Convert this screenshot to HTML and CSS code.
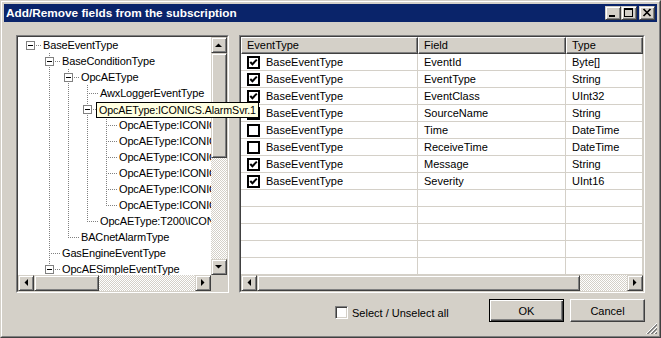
FILE: index.html
```html
<!DOCTYPE html>
<html>
<head>
<meta charset="utf-8">
<title>Add/Remove fields</title>
<link rel="stylesheet" href="styles.css">
</head>
<body>
<div class="window">
  <div class="frame">
    <div class="titlebar">
      <span class="title">Add/Remove fields from the subscription</span>
      <div class="caps">
        <div class="cap raised"><svg width="14" height="12" viewBox="0 0 14 12"><rect x="3" y="8" width="6" height="2" fill="#000"/></svg></div>
        <div class="cap raised"><svg width="14" height="12" viewBox="0 0 14 12"><path d="M2 1h9v9h-9z M3 3h7v6h-7z" fill="#000" fill-rule="evenodd"/></svg></div>
        <div class="cap raised close"><svg width="14" height="12" viewBox="0 0 14 12"><path d="M3.5 2 L10.5 9 M10.5 2 L3.5 9" stroke="#000" stroke-width="1.7" fill="none"/></svg></div>
      </div>
    </div>

    <div class="body">
      <div class="panels">
        <div class="sunken tree-box">
          <div class="sunken-in tree-grid">
            <div class="tree">
              <div class="trow"><span class="c r"><i class="bx"></i></span><span class="tl">BaseEventType</span></div>
              <div class="trow"><span class="c"></span><span class="c t"><i class="bx"></i></span><span class="tl">BaseConditionType</span></div>
              <div class="trow"><span class="c"></span><span class="c v"></span><span class="c t"><i class="bx"></i></span><span class="tl">OpcAEType</span></div>
              <div class="trow"><span class="c"></span><span class="c v"></span><span class="c v"></span><span class="c t"></span><span class="tl">AwxLoggerEventType</span></div>
              <div class="trow"><span class="c"></span><span class="c v"></span><span class="c v"></span><span class="c t"><i class="bx"></i></span><span class="tl">OpcAEType:ICONICS</span></div>
              <div class="trow"><span class="c"></span><span class="c v"></span><span class="c v"></span><span class="c v"></span><span class="c t"></span><span class="tl">OpcAEType:ICONICS</span></div>
              <div class="trow"><span class="c"></span><span class="c v"></span><span class="c v"></span><span class="c v"></span><span class="c t"></span><span class="tl">OpcAEType:ICONICS</span></div>
              <div class="trow"><span class="c"></span><span class="c v"></span><span class="c v"></span><span class="c v"></span><span class="c t"></span><span class="tl">OpcAEType:ICONICS</span></div>
              <div class="trow"><span class="c"></span><span class="c v"></span><span class="c v"></span><span class="c v"></span><span class="c t"></span><span class="tl">OpcAEType:ICONICS</span></div>
              <div class="trow"><span class="c"></span><span class="c v"></span><span class="c v"></span><span class="c v"></span><span class="c t"></span><span class="tl">OpcAEType:ICONICS</span></div>
              <div class="trow"><span class="c"></span><span class="c v"></span><span class="c v"></span><span class="c v"></span><span class="c l"></span><span class="tl">OpcAEType:ICONICS</span></div>
              <div class="trow"><span class="c"></span><span class="c v"></span><span class="c v"></span><span class="c l"></span><span class="tl">OpcAEType:T200\ICONI</span></div>
              <div class="trow"><span class="c"></span><span class="c v"></span><span class="c l"></span><span class="tl">BACnetAlarmType</span></div>
              <div class="trow"><span class="c"></span><span class="c t"></span><span class="tl">GasEngineEventType</span></div>
              <div class="trow"><span class="c"></span><span class="c t"><i class="bx"></i></span><span class="tl">OpcAESimpleEventType</span></div>
            </div>
            <div class="vscroll">
              <div class="sbtn raised"><svg width="14" height="14" viewBox="0 0 14 14"><polygon points="3,9 10,9 6.5,5.5" fill="#000"/></svg></div>
              <div class="thumb raised tv-thumb"></div>
              <div class="track"></div>
              <div class="sbtn raised"><svg width="14" height="14" viewBox="0 0 14 14"><polygon points="3,5 10,5 6.5,8.5" fill="#000"/></svg></div>
            </div>
            <div class="hscroll">
              <div class="sbtn raised"><svg width="14" height="14" viewBox="0 0 14 14"><polygon points="9,3 9,10 5.5,6.5" fill="#000"/></svg></div>
              <div class="thumb raised th-thumb"></div>
              <div class="track"></div>
              <div class="sbtn raised"><svg width="14" height="14" viewBox="0 0 14 14"><polygon points="5,3 5,10 8.5,6.5" fill="#000"/></svg></div>
            </div>
            <div class="corner"></div>
          </div>
        </div>

        <div class="sunken list-box">
          <div class="sunken-in list-grid">
            <div class="lhead">
              <div class="hcell">EventType</div>
              <div class="hcell">Field</div>
              <div class="hcell">Type</div>
            </div>
            <div class="lrows">
              <div class="lrow"><div class="cell"><span class="lchk on"><svg width="9" height="9" viewBox="0 0 9 9"><polyline points="1.3,4 3.4,6.2 7.8,1.6" stroke="#000" stroke-width="2" fill="none"/></svg></span><span class="ltxt">BaseEventType</span></div><div class="cell">EventId</div><div class="cell">Byte[]</div></div>
              <div class="lrow"><div class="cell"><span class="lchk on"><svg width="9" height="9" viewBox="0 0 9 9"><polyline points="1.3,4 3.4,6.2 7.8,1.6" stroke="#000" stroke-width="2" fill="none"/></svg></span><span class="ltxt">BaseEventType</span></div><div class="cell">EventType</div><div class="cell">String</div></div>
              <div class="lrow"><div class="cell"><span class="lchk on"><svg width="9" height="9" viewBox="0 0 9 9"><polyline points="1.3,4 3.4,6.2 7.8,1.6" stroke="#000" stroke-width="2" fill="none"/></svg></span><span class="ltxt">BaseEventType</span></div><div class="cell">EventClass</div><div class="cell">UInt32</div></div>
              <div class="lrow"><div class="cell"><span class="lchk"></span><span class="ltxt">BaseEventType</span></div><div class="cell">SourceName</div><div class="cell">String</div></div>
              <div class="lrow"><div class="cell"><span class="lchk"></span><span class="ltxt">BaseEventType</span></div><div class="cell">Time</div><div class="cell">DateTime</div></div>
              <div class="lrow"><div class="cell"><span class="lchk"></span><span class="ltxt">BaseEventType</span></div><div class="cell">ReceiveTime</div><div class="cell">DateTime</div></div>
              <div class="lrow"><div class="cell"><span class="lchk on"><svg width="9" height="9" viewBox="0 0 9 9"><polyline points="1.3,4 3.4,6.2 7.8,1.6" stroke="#000" stroke-width="2" fill="none"/></svg></span><span class="ltxt">BaseEventType</span></div><div class="cell">Message</div><div class="cell">String</div></div>
              <div class="lrow"><div class="cell"><span class="lchk on"><svg width="9" height="9" viewBox="0 0 9 9"><polyline points="1.3,4 3.4,6.2 7.8,1.6" stroke="#000" stroke-width="2" fill="none"/></svg></span><span class="ltxt">BaseEventType</span></div><div class="cell">Severity</div><div class="cell">UInt16</div></div>
              <div class="lrow"><div class="cell"></div><div class="cell"></div><div class="cell"></div></div>
              <div class="lrow"><div class="cell"></div><div class="cell"></div><div class="cell"></div></div>
              <div class="lrow"><div class="cell"></div><div class="cell"></div><div class="cell"></div></div>
              <div class="lrow"><div class="cell"></div><div class="cell"></div><div class="cell"></div></div>
              <div class="lrow"><div class="cell"></div><div class="cell"></div><div class="cell"></div></div>
            </div>
            <div class="hscroll">
              <div class="sbtn raised"><svg width="14" height="14" viewBox="0 0 14 14"><polygon points="9,3 9,10 5.5,6.5" fill="#000"/></svg></div>
              <div class="thumb raised lh-thumb"></div>
              <div class="track"></div>
              <div class="sbtn raised"><svg width="14" height="14" viewBox="0 0 14 14"><polygon points="5,3 5,10 8.5,6.5" fill="#000"/></svg></div>
            </div>
          </div>
        </div>
      </div>

      <div class="footer">
        <label class="selall"><span class="chk3d"></span><span>Select / Unselect all</span></label>
        <div class="pbtn default">OK</div>
        <div class="pbtn">Cancel</div>
      </div>
    </div>
  </div>

  <div class="tooltip">OpcAEType:ICONICS.AlarmSvr.1</div>

  <svg class="grip" width="12" height="12" viewBox="0 0 12 12" shape-rendering="crispEdges">
    <path d="M11 0 L0 11" stroke="#fff"/>
    <path d="M11 1 L1 11 M11 2 L2 11" stroke="#808080"/>
    <path d="M11 4 L4 11" stroke="#fff"/>
    <path d="M11 5 L5 11 M11 6 L6 11" stroke="#808080"/>
    <path d="M11 8 L8 11" stroke="#fff"/>
    <path d="M11 9 L9 11 M11 10 L10 11" stroke="#808080"/>
  </svg>
</div>
</body>
</html>
```

FILE: styles.css
```css
* { box-sizing: border-box; }
html, body { margin: 0; padding: 0; }
body {
  width: 661px;
  height: 338px;
  overflow: hidden;
  background: #D4D0C8;
  font-family: "Liberation Sans", Arial, sans-serif;
  font-size: 11px;
  color: #000;
}

.window {
  position: relative;
  width: 661px;
  height: 338px;
  border: 1px solid;
  border-color: #D4D0C8 #404040 #404040 #D4D0C8;
}
.frame {
  height: 100%;
  border: 1px solid;
  border-color: #fff #808080 #808080 #fff;
  padding: 2px;
  background: #D4D0C8;
  display: flex;
  flex-direction: column;
}

/* title bar */
.titlebar {
  height: 18px;
  flex: none;
  background: #0A246A;
  display: flex;
  align-items: center;
  padding-left: 2px;
}
.title {
  flex: 1;
  color: #fff;
  font-weight: bold;
  font-size: 11.8px;
  white-space: nowrap;
}
.caps { display: flex; margin-right: 2px; }
.cap { width: 16px; height: 14px; }
.cap svg { display: block; }
.cap.close { margin-left: 2px; }

.raised {
  background: #D4D0C8;
  border: 1px solid;
  border-color: #D4D0C8 #404040 #404040 #D4D0C8;
  box-shadow: inset 1px 1px #fff, inset -1px -1px #808080;
}

/* body */
.body {
  flex: 1;
  display: flex;
  flex-direction: column;
  padding: 13px 12px 0 12px;
}
.panels {
  display: flex;
  gap: 10px;
  height: 258px;
  flex: none;
}
.sunken {
  border: 1px solid;
  border-color: #808080 #fff #fff #808080;
}
.sunken-in {
  height: 100%;
  border: 1px solid;
  border-color: #404040 #D4D0C8 #D4D0C8 #404040;
  background: #fff;
}
.tree-box { width: 213px; }
.list-box { width: 406px; }

/* tree */
.tree-grid {
  display: grid;
  grid-template-columns: 1fr 16px;
  grid-template-rows: 1fr 16px;
}
.tree {
  overflow: hidden;
  padding-left: 3px;
}
.trow {
  display: flex;
  height: 16px;
  white-space: nowrap;
}
.c {
  position: relative;
  flex: none;
  width: 19px;
  height: 16px;
}
.c.v::before, .c.t::before, .c.l::before {
  content: "";
  position: absolute;
  left: 9px;
  top: 0;
  width: 1px;
  height: 16px;
  background: repeating-linear-gradient(to bottom, #808080 0 1px, transparent 1px 2px);
}
.c.l::before { height: 9px; }
.c.t::after, .c.l::after, .c.r::after {
  content: "";
  position: absolute;
  left: 10px;
  top: 8px;
  width: 10px;
  height: 1px;
  background: repeating-linear-gradient(to right, transparent 0 1px, #808080 1px 2px);
}
.bx {
  position: absolute;
  left: 5px;
  top: 4px;
  width: 9px;
  height: 9px;
  border: 1px solid #808080;
  background: #fff;
  z-index: 1;
}
.bx::after {
  content: "";
  position: absolute;
  left: 1px;
  top: 3px;
  width: 5px;
  height: 1px;
  background: #000;
}
.tl {
  margin-left: 3px;
  line-height: 16px;
  letter-spacing: -0.15px;
}

/* scrollbars */
.vscroll {
  display: flex;
  flex-direction: column;
}
.hscroll {
  display: flex;
  height: 16px;
}
.sbtn { width: 16px; height: 16px; flex: none; }
.sbtn svg { display: block; }
.track {
  flex: 1;
  background: repeating-conic-gradient(#D4D0C8 0 25%, #fff 0 50%) 0 0 / 2px 2px;
}
.tv-thumb { height: 105px; flex: none; }
.th-thumb { width: 65px; flex: none; }
.lh-thumb { width: 323px; flex: none; }
.corner { background: #D4D0C8; }

/* list */
.list-grid {
  display: grid;
  grid-template-rows: 17px 1fr 16px;
}
.lhead {
  display: grid;
  grid-template-columns: 177px 148px 77px;
}
.hcell {
  background: #D4D0C8;
  border: 1px solid;
  border-color: #fff #404040 #404040 #fff;
  box-shadow: inset -1px -1px #808080;
  padding-left: 5px;
  line-height: 14px;
  white-space: nowrap;
  overflow: hidden;
}
.lrows { overflow: hidden; }
.lrow {
  display: grid;
  grid-template-columns: 177px 148px 77px;
  height: 17px;
}
.cell {
  display: flex;
  align-items: center;
  padding-left: 6px;
  border-right: 1px solid #D4D0C8;
  border-bottom: 1px solid #D4D0C8;
  white-space: nowrap;
  overflow: hidden;
}
.lchk {
  flex: none;
  width: 13px;
  height: 13px;
  border: 2px solid #000;
  background: #fff;
  padding: 0;
}
.lchk svg { display: block; }
.ltxt { margin-left: 6px; }

/* footer */
.footer {
  display: flex;
  align-items: center;
  margin-top: 6px;
  height: 23px;
  flex: none;
}
.selall {
  display: flex;
  align-items: center;
  margin-left: 319px;
  margin-top: 4px;
}
.chk3d {
  width: 13px;
  height: 13px;
  border: 1px solid;
  border-color: #808080 #fff #fff #808080;
  background: #fff;
  box-shadow: inset 1px 1px #404040, inset -1px -1px #D4D0C8;
  margin-right: 4px;
}
.pbtn {
  width: 75px;
  height: 23px;
  display: flex;
  align-items: center;
  justify-content: center;
  background: #D4D0C8;
  border: 1px solid;
  border-color: #fff #404040 #404040 #fff;
  box-shadow: inset -1px -1px #808080;
  margin-left: 6px;
}
.pbtn.default {
  margin-left: auto;
  border: 1px solid #000;
  box-shadow: inset 1px 1px #fff, inset -1px -1px #404040, inset -2px -2px #808080;
}

/* overlays */
.tooltip {
  position: absolute;
  left: 95px;
  top: 101px;
  height: 16px;
  border: 1px solid #000;
  background: #FFFFE1;
  padding: 0 2px 0 2px;
  line-height: 14px;
  font-size: 10.7px;
  letter-spacing: -0.1px;
  white-space: nowrap;
}
.grip {
  position: absolute;
  right: 2px;
  bottom: 2px;
}
```
